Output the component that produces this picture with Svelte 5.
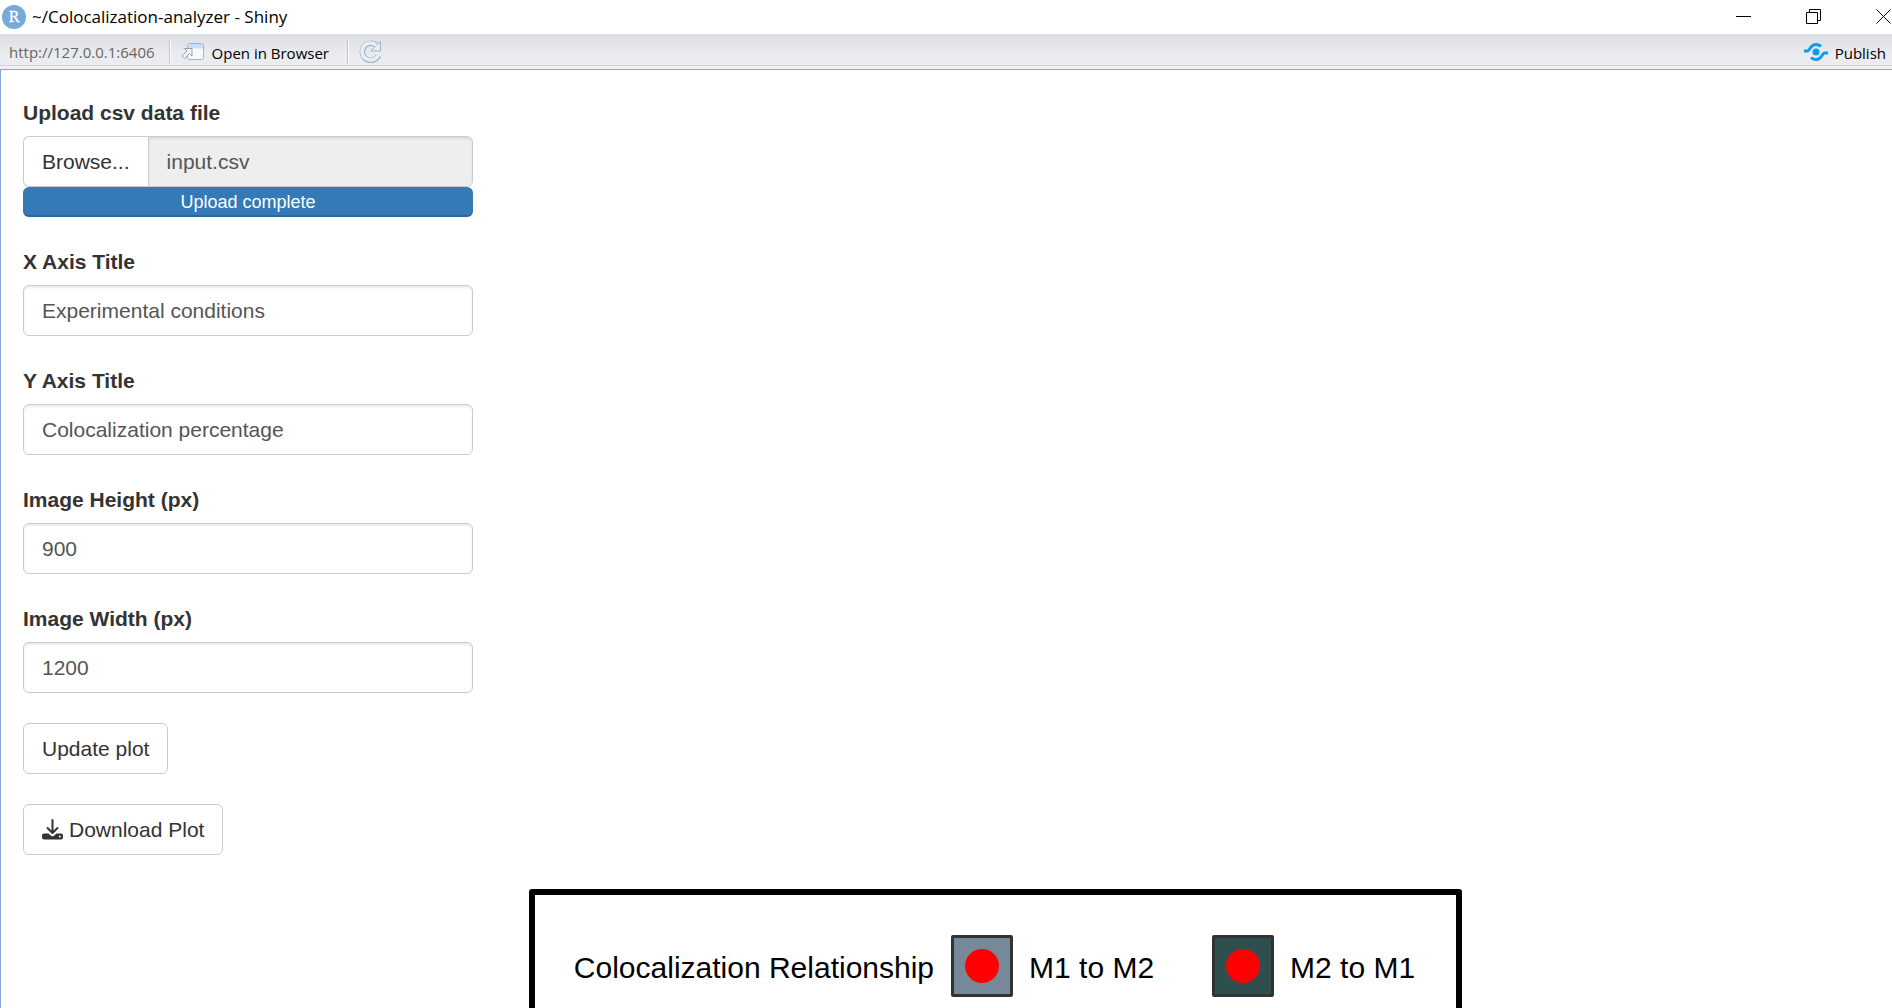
<script>
  let xTitle = $state('Experimental conditions');
  let yTitle = $state('Colocalization percentage');
  let imageHeight = $state('900');
  let imageWidth = $state('1200');
</script>

<div class="window">
  <header class="titlebar">
    <svg class="logo" viewBox="0 0 24 24" width="24" height="24" aria-hidden="true">
      <circle cx="12" cy="12" r="12" fill="#75aadb" />
      <text x="12" y="17" text-anchor="middle" font-family="Liberation Serif, serif" font-size="16" fill="#fff" stroke="#fff" stroke-width=".3">R</text>
    </svg>
    <h1>~/Colocalization-analyzer - Shiny</h1>
    <div class="controls">
      <button aria-label="Minimize">
        <svg viewBox="0 0 16 16" width="16" height="16"><path d="M0 7.500h15" stroke="#000" /></svg>
      </button>
      <button aria-label="Restore">
        <svg viewBox="0 0 16 16" width="16" height="16" fill="none" stroke="#000"><path d="M.5 3.500h11v11H.5zM3.500 3.500v-3h11v11h-3" /></svg>
      </button>
      <button aria-label="Close">
        <svg viewBox="0 0 16 16" width="16" height="16"><path d="M.5.5l14 14M14.500.5l-14 14" stroke="#000" /></svg>
      </button>
    </div>
  </header>

  <nav class="toolbar">
    <span class="url">http://127.0.0.1:6406</span>
    <span class="sep"></span>
    <button class="tool open">
      <svg viewBox="0 0 24 20" width="24" height="20" aria-hidden="true">
        <rect x="6.500" y="1.500" width="16" height="16" rx="2" fill="#f6f8fb" stroke="#a3b4c6" />
        <path d="M7 6.500V3.500q0-1.500 1.500-1.500h12q1.500 0 1.500 1.500v3z" fill="#c5e0f8" />
        <path d="M3.500 6.500h7.500v7.500l-2.500-2.500-5 5-2.500-2.500 5-5z" fill="#f2f4f7" stroke="#93a2b2" />
      </svg>
      <span>Open in Browser</span>
    </button>
    <span class="sep"></span>
    <button class="tool" aria-label="Reload">
      <svg viewBox="0 0 24 24" width="24" height="24" fill="none" aria-hidden="true">
        <path d="M17.500 5.500A8.500 8.500 0 1 0 19.500 15.500" stroke="#a3b3c5" stroke-width="5.500" />
        <path d="M21.500 1.500v9.500h-9.500l3-3 3-3z" fill="#e6eef8" stroke="#a3b3c5" />
        <path d="M17.500 5.500A8.500 8.500 0 1 0 19.300 15" stroke="#e6eef8" stroke-width="3.500" />
      </svg>
    </button>
    <button class="tool publish">
      <svg viewBox="0 0 24 20" width="24" height="20" fill="none" stroke="#0d9bee" stroke-width="3" aria-hidden="true">
        <circle cx="12" cy="10" r="3.500" fill="#0d9bee" stroke="none" />
        <path d="M0 9h3.500C6 9 6 2.500 12 2.500q3 0 5 2M24 11h-3.500C18 11 18 17.500 12 17.500q-3 0-5-2" />
      </svg>
      <span>Publish</span>
    </button>
  </nav>

  <main>
    <form class="sidebar" onsubmit={(e) => e.preventDefault()}>
      <div class="field">
        <label for="file">Upload csv data file</label>
        <div>
          <div class="file">
            <button type="button">Browse...</button>
            <input id="file" value="input.csv" readonly />
          </div>
          <div class="progress">Upload complete</div>
        </div>
      </div>
      <div class="field">
        <label for="x">X Axis Title</label>
        <input id="x" bind:value={xTitle} />
      </div>
      <div class="field">
        <label for="y">Y Axis Title</label>
        <input id="y" bind:value={yTitle} />
      </div>
      <div class="field">
        <label for="h">Image Height (px)</label>
        <input id="h" inputmode="numeric" bind:value={imageHeight} />
      </div>
      <div class="field">
        <label for="w">Image Width (px)</label>
        <input id="w" inputmode="numeric" bind:value={imageWidth} />
      </div>
      <button type="button">Update plot</button>
      <button type="button">
        <svg viewBox="0 0 21 21" width="21" height="21" aria-hidden="true">
          <path d="M10.500 1v12M5.500 9l5 5 5-5" fill="none" stroke="#333" stroke-width="2" stroke-linecap="round" stroke-linejoin="round" />
          <path fill-rule="evenodd" d="M2 14.500h4.500l2.500 2.200q1.500 1 3 0l2.500-2.200H19q2 0 2 2V18.500q0 2-2 2H2q-2 0-2-2v-2q0-2 2-2zM17.800 16.500a1 1 0 1 0 0 2 1 1 0 1 0 0-2z" fill="#333" />
        </svg>
        Download Plot
      </button>
    </form>

    <section class="plot" aria-label="Plot">
      <div class="legend">
        <span class="legend-title">Colocalization Relationship</span>
        <span class="entry"><span class="key slate"></span>M1 to M2</span>
        <span class="entry"><span class="key dark"></span>M2 to M1</span>
      </div>
    </section>
  </main>
</div>

<style>
  :global(body) {
    overflow: hidden;
    background: #fff;
  }
  .window,
  .window * {
    box-sizing: border-box;
  }
  .window {
    height: 100vh;
    display: flex;
    flex-direction: column;
    overflow: hidden;
    font-family: 'Liberation Sans', Arial, sans-serif;
    color: #333;
  }
  button,
  input {
    font: inherit;
    color: inherit;
  }
  svg {
    display: block;
    flex: none;
  }
  .titlebar {
    flex: none;
    height: 34px;
    display: flex;
    align-items: center;
    gap: 6px;
    padding-left: 2px;
  }
  .titlebar,
  .toolbar {
    font-family: 'Open Sans', 'Noto Sans', sans-serif;
    color: #000;
  }
  h1 {
    margin: 0;
    font-size: 17px;
    font-weight: 400;
    line-height: 36px;
  }
  .controls {
    margin-left: auto;
    display: flex;
    gap: 54px;
  }
  .controls button,
  .tool {
    border: 0;
    padding: 0;
    background: none;
  }
  .toolbar {
    flex: none;
    height: 36px;
    display: flex;
    align-items: center;
    padding: 0 6px 0 9px;
    background: linear-gradient(#dcdee3, #ebecf0 60%);
    border-bottom: 1px solid #86a5dc;
    box-shadow: inset 0 -3px #eff0f3, inset 0 -4px #d3d5d9;
    font-size: 15px;
  }
  .url {
    margin-right: 4px;
    color: #666;
  }
  .sep {
    width: 2px;
    height: 24px;
    margin: 0 10px;
    background: #c2c4c8;
    border-right: 1px solid #fafafa;
  }
  .tool {
    display: flex;
    align-items: center;
    gap: 7px;
  }
  .tool span {
    padding-top: 2px;
  }
  .open {
    margin-right: 8px;
  }
  .publish {
    margin-left: auto;
  }
  main {
    flex: 1;
    min-height: 0;
    padding: 28px 22px 0;
    border-left: 1px solid #86a5dc;
  }
  .sidebar {
    width: 450px;
    display: flex;
    flex-direction: column;
    align-items: flex-start;
    gap: 30px;
    font-size: 21px;
    line-height: 30px;
  }
  .field {
    width: 100%;
    display: flex;
    flex-direction: column;
    gap: 8px;
  }
  label {
    font-weight: 700;
  }
  .sidebar input,
  .sidebar button {
    height: 51px;
    padding: 0 18px;
    border: 1px solid #ccc;
    border-radius: 6px;
    background: #fff;
  }
  .sidebar input {
    width: 100%;
    min-width: 0;
    color: #555;
    box-shadow: inset 0 2px 2px rgba(0, 0, 0, 0.075);
  }
  .sidebar button {
    display: flex;
    align-items: center;
    gap: 6px;
  }
  .file {
    display: flex;
  }
  .sidebar .file button {
    border-right: 0;
    border-radius: 6px 0 0 6px;
  }
  .sidebar .file input {
    flex: 1;
    border-radius: 0 6px 6px 0;
    background: #eee;
  }
  .progress {
    height: 30px;
    border-radius: 6px;
    background: #337ab7;
    box-shadow: inset 0 -2px rgba(0, 0, 0, 0.15);
    color: #fff;
    font-size: 18px;
    text-align: center;
  }
  .plot {
    display: flex;
    justify-content: center;
    margin-top: 34px;
    padding-left: 98px;
  }
  .legend {
    flex: none;
    display: flex;
    align-items: flex-start;
    height: 200px;
    padding: 40px 41px 0 39px;
    border: 6px solid #000;
    border-radius: 3px;
    color: #000;
    font-size: 30px;
    line-height: 66px;
    white-space: nowrap;
  }
  .entry {
    display: flex;
    gap: 16px;
    margin-left: 17px;
  }
  .entry + .entry {
    margin-left: 58px;
  }
  .key {
    width: 62px;
    height: 62px;
    border: 3px solid #333;
    border-radius: 2px;
    display: grid;
    place-items: center;
  }
  .key::after {
    content: '';
    width: 34px;
    height: 34px;
    border-radius: 50%;
    background: #f00;
  }
  .slate {
    background: #778899;
  }
  .dark {
    background: #2f4f4f;
  }
</style>
